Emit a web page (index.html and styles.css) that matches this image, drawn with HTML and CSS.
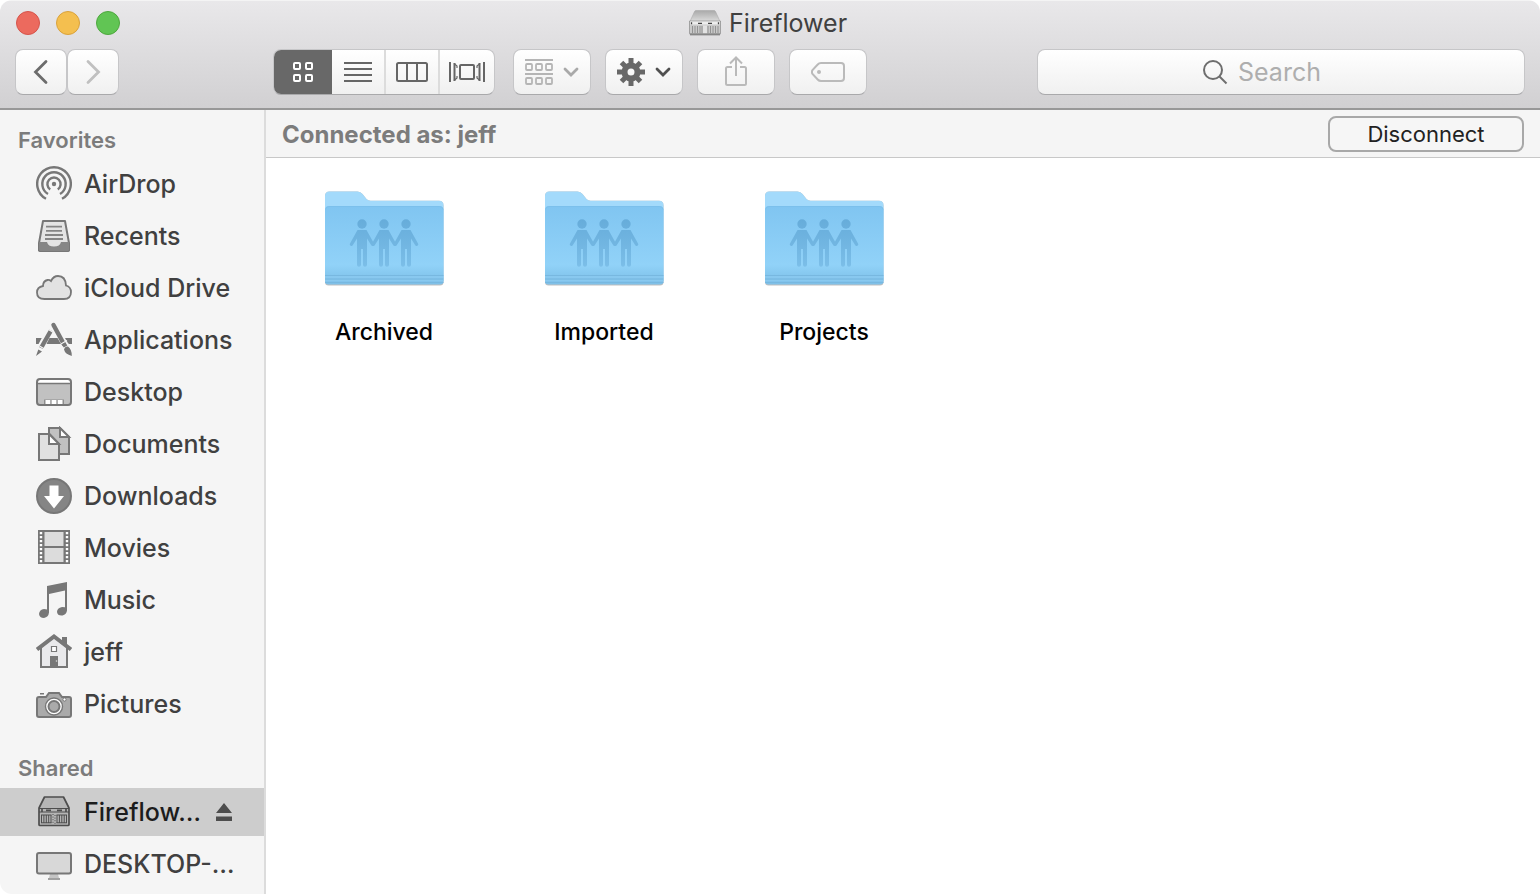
FILE: index.html
```html
<!DOCTYPE html>
<html lang="en">
<head>
<meta charset="utf-8">
<title>Fireflower</title>
<meta name="viewport" content="width=device-width, initial-scale=1">
<link rel="stylesheet" href="styles.css">
</head>
<body>
<svg class="defs" aria-hidden="true">
  <defs>
    <linearGradient id="folder-front" x1="0" y1="0" x2="0" y2="1">
      <stop offset="0" stop-color="#80c5f1"/>
      <stop offset="0.75" stop-color="#91d2f8"/>
      <stop offset="0.87" stop-color="#86c8ef"/>
      <stop offset="1" stop-color="#7fc0e8"/>
    </linearGradient>
    <linearGradient id="server-top" x1="0" y1="0" x2="0" y2="1">
      <stop offset="0" stop-color="#a9a9a9"/>
      <stop offset="1" stop-color="#dcdcdc"/>
    </linearGradient>
    <linearGradient id="people" gradientUnits="userSpaceOnUse" x1="0" y1="43" x2="0" y2="90">
      <stop offset="0" stop-color="#66acda"/>
      <stop offset="1" stop-color="#7bbee8"/>
    </linearGradient>
    <g id="person">
      <circle cx="0" cy="48" r="4.7"/>
      <path d="M-4.500 54h9l7.500 13.500a1.600 1.600 0 0 1-2.900 1.500L5 62.500V88.700a1.500 1.500 0 0 1-4 0V73h-2v15.700a1.500 1.500 0 0 1-4 0V62.500L-9.100 69a1.600 1.600 0 0 1-2.900-1.500z"/>
    </g>
    <symbol id="folder" viewBox="0 0 128 128">
      <path d="M5 106V20q0-4.500 4.500-4.500h28q3 0 5 2.500l4 5q1.500 1.700 4 1.700h68.500q4.500 0 4.500 4.500V106q0 3.500-3.500 3.500H8.500Q5 109.500 5 106z" fill="#000" opacity=".25"/>
      <path d="M5 105V20q0-4.500 4.500-4.500h28q3 0 5 2.500l4 5q1.500 1.700 4 1.700h68.500q4.500 0 4.500 4.500V105z" fill="#a3dafb"/>
      <path d="M5 34q0-4 4-4h110.500q4 0 4 4v71q0 3.500-3.500 3.500H8.500Q5 108.500 5 105z" fill="url(#folder-front)"/>
      <path d="M5.500 33.500q.5-3 3.500-3h110.500q3 0 3.500 3" fill="none" stroke="#7abfeb" stroke-width=".8"/>
      <path d="M5 99.500h118.500M5 103h118.500M5 106.500h118.500" stroke="#78b8e0" stroke-width="1"/>
      <path d="M5 101h118.500M5 104.700h118.500" stroke="#8dcbf1" stroke-width="1"/>
      <g fill="url(#people)">
        <use href="#person" x="42"/>
        <use href="#person" x="64"/>
        <use href="#person" x="86"/>
      </g>
    </symbol>
  </defs>
</svg>
<div class="window">
  <header class="chrome">
    <div class="titlebar">
      <div class="lights">
        <button class="light light-close" aria-label="Close"></button>
        <button class="light light-min" aria-label="Minimize"></button>
        <button class="light light-zoom" aria-label="Zoom"></button>
      </div>
      <h1 class="title">
        <svg class="title-icon" viewBox="0 0 32 26" aria-hidden="true">
          <path d="M1 24h30v1.500H1z" fill="#000" opacity=".3"/>
          <path d="M5.500 1.500Q6 .5 7 .5h18q1 0 1.500 1L31 11.500H1z" fill="url(#server-top)" stroke="#aaa" stroke-width=".6"/>
          <path d="M.5 11h31v12.500q0 .8-.8.800H1.300q-.8 0-.8-.8z" fill="#c9c9c9" stroke="#8a8a8a" stroke-width=".7"/>
          <path d="M1 11.500h30v3H1z" fill="#ededed"/>
          <path d="M2.500 12.200v2M29.500 12.200v2M9 13.300h4M19 13.300h4" stroke="#444" stroke-width="1.300"/>
          <path d="M3.500 16v7M6 16v7M8.500 16v7M11 16v7M13 16v7M19 16v7M21.500 16v7M24 16v7M26.500 16v7M29 16v7" stroke="#8c8c8c" stroke-width=".9"/>
          <path d="M15 15.500v8M17 15.500v8" stroke="#f4f4f4" stroke-width="1.200"/>
          <path d="M1 24h30" stroke="#777"/>
        </svg>
        <span>Fireflower</span>
      </h1>
    </div>
    <div class="toolbar">
      <div class="nav">
        <button class="tool nav-button" aria-label="Back"><svg width="16" height="26" viewBox="0 0 16 26" fill="none" stroke="#6c6c6c" stroke-width="2.800" stroke-linecap="round"><path d="M13 2.500 2.500 13 13 23.500"/></svg></button>
        <button class="tool nav-button" aria-label="Forward" disabled><svg width="16" height="26" viewBox="0 0 16 26" fill="none" stroke="#c0c0c0" stroke-width="2.800" stroke-linecap="round"><path d="M3 2.500 13.500 13 3 23.500"/></svg></button>
      </div>
      <div class="views">
        <button class="view view-active" aria-label="Icon view"><svg width="22" height="22" viewBox="0 0 22 22" fill="none" stroke="#fff" stroke-width="2"><rect x="2" y="2" width="6" height="6" rx="1"/><rect x="14" y="2" width="6" height="6" rx="1"/><rect x="2" y="14" width="6" height="6" rx="1"/><rect x="14" y="14" width="6" height="6" rx="1"/></svg></button>
        <button class="view view-list" aria-label="List view"><svg width="28" height="20" viewBox="0 0 28 20" stroke="#666" stroke-width="2"><path d="M0 1h28M0 7h28M0 13h28M0 19h28"/></svg></button>
        <button class="view" aria-label="Column view"><svg width="32" height="20" viewBox="0 0 32 20" fill="none" stroke="#666" stroke-width="2"><rect x="1" y="1" width="30" height="18" rx="1.500"/><path d="M11 1v18M21 1v18"/></svg></button>
        <button class="view view-flow" aria-label="Cover flow view"><svg width="36" height="20" viewBox="0 0 36 20" fill="none" stroke="#666" stroke-width="2"><rect x="11" y="3" width="14" height="14" rx="1"/><path d="M1 0v20M35 0v20M5.500 1v18M30.500 1v18"/><path d="M5 1.500 8 4v2M5 18.500 8 16v-2M31 1.500 28 4v2M31 18.500 28 16v-2" stroke-width="1.200"/></svg></button>
      </div>
      <button class="tool menu-button" aria-label="Arrange" disabled>
        <svg width="28" height="26" viewBox="0 0 28 26" fill="none" stroke="#b5b5b5" stroke-width="1.800"><path d="M0 1h28M0 15h28"/><rect x="1" y="5" width="6" height="6" rx="1"/><rect x="11" y="5" width="6" height="6" rx="1"/><rect x="21" y="5" width="6" height="6" rx="1"/><rect x="1" y="19" width="6" height="6" rx="1"/><rect x="11" y="19" width="6" height="6" rx="1"/><rect x="21" y="19" width="6" height="6" rx="1"/></svg>
        <svg width="16" height="12" viewBox="0 0 16 12" fill="none" stroke="#a9a9a9" stroke-width="2.800" stroke-linecap="round"><path d="m2 3 6 6 6-6"/></svg>
      </button>
      <button class="tool menu-button" aria-label="Actions">
        <svg width="28" height="28" viewBox="-14 -14 28 28"><g stroke="#686868" stroke-width="5"><path d="M0-14v8M0 14V6M-14 0h8M14 0H6"/><path d="m-9.500-9.500 5 5M9.500 9.500l-5-5M-9.500 9.500l5-5M9.500-9.500l-5 5"/></g><circle r="6.500" fill="none" stroke="#686868" stroke-width="6"/></svg>
        <svg width="16" height="12" viewBox="0 0 16 12" fill="none" stroke="#505050" stroke-width="2.800" stroke-linecap="round"><path d="m2 3 6 6 6-6"/></svg>
      </button>
      <button class="tool menu-button" aria-label="Share" disabled><svg width="24" height="32" viewBox="0 0 24 32" fill="none" stroke="#bababa" stroke-width="2"><path d="M8 11H3.500Q2 11 2 12.500v15Q2 29 3.500 29h17q1.500 0 1.500-1.500v-15Q22 11 20.500 11H16M12 20V1.500M6 7.500l6-6 6 6"/></svg></button>
      <button class="tool menu-button" aria-label="Edit tags" disabled><svg width="34" height="20" viewBox="0 0 34 20" fill="none" stroke="#bababa" stroke-width="2"><path d="M10 1h20q3 0 3 3v12q0 3-3 3H10q-2 0-3.300-1.500L1.500 12q-1.200-2 0-4l5.200-5.500Q8 1 10 1z"/><circle cx="8" cy="10" r="2" fill="#bababa" stroke="none"/></svg></button>
      <label class="tool search">
        <svg width="26" height="26" viewBox="0 0 26 26" fill="none" stroke="#6e6e6e" stroke-width="2"><circle cx="11" cy="11" r="9"/><path d="m17.500 17.500 7 7"/></svg>
        <input class="search-input" type="text" placeholder="Search" aria-label="Search">
      </label>
    </div>
  </header>
  <div class="body">
    <nav class="sidebar">
      <section class="group">
        <h2 class="group-title">Favorites</h2>
        <ul class="places">
          <li><a class="place" href="#"><svg class="icon" viewBox="0 0 36 36" fill="none" stroke="#777" stroke-width="2.400"><path d="M10 32.800A16.800 16.800 0 1 1 26 32.800"/><path d="M12 28A11.700 11.700 0 1 1 24 28"/><path d="M14.200 23.500A6.600 6.600 0 1 1 21.800 23.500"/><circle cx="18" cy="18" r="2.200" fill="#777" stroke="none"/></svg><span>AirDrop</span></a></li>
          <li><a class="place" href="#"><svg class="icon" viewBox="0 0 36 36"><path d="M7 3h22l4 22v7.500L32 33H4l-1-.5V25z" fill="#e4e4e4" stroke="#777" stroke-width="2" stroke-linejoin="round"/><path d="M3 24h8q1 4.500 7 4.500T25 24h8v8l-1 1H4l-1-1z" fill="#868686"/><path d="M10 8.700h16M10 12.800h16M9 17h18M9 21h18" stroke="#858585" stroke-width="1.800"/></svg><span>Recents</span></a></li>
          <li><a class="place" href="#"><svg class="icon" viewBox="0 0 36 36"><path d="M8.500 29Q1 29 1 22.500q0-5.500 6-6.500 0-5 4.500-6 2-.3 3.500 1Q17.500 6 22 6q7.500 0 8 9.500 5 1.500 5 6.500 0 7-7 7z" fill="#e2e2e2" stroke="#777" stroke-width="1.800"/></svg><span>iCloud Drive</span></a></li>
          <li><a class="place" href="#"><svg class="icon" viewBox="0 0 36 36"><path d="M0 16h36v6H0z" fill="#777"/><g fill="none" stroke="#f5f5f5" stroke-width="7.500"><path d="M17.500 2 2 31"/><path d="m17 3 17 29"/></g><path d="M13.500 16h8l3.500 6H10.500z" fill="#777"/><g fill="none" stroke="#777" stroke-width="4.400"><path d="M15 8.500 5 26"/><path d="m17.500 3 10 18.500" stroke-linecap="round"/></g><path d="m12.500 7.500 5 3M3.500 24l5 3M25 22l6-3.500M27 25l6-3" stroke="#f5f5f5" stroke-width="1.200"/><path d="M2.300 27.500 6 29.500 0 34zM28 27.500Q29 24 32 24.500q4 3 3.800 9.500Q29 32 28 27.500zM25.500 22.500l4-2 1.800 3-3.500 2z" fill="#777"/></svg><span>Applications</span></a></li>
          <li><a class="place" href="#"><svg class="icon" viewBox="0 0 36 36"><rect x="1" y="5" width="34" height="26" rx="3" fill="#c1c1c1"/><path d="M2 9V7.500Q2 6 4 6h28q2 0 2 1.500V9z" fill="#fff"/><path d="M1 9.500h34" stroke="#777" stroke-width="1.600"/><path d="M8 25.500h20V31H8z" fill="#8e8e8e"/><path d="M9.500 26h4.800v4H9.500zM15.600 26h4.800v4h-4.800zM21.700 26h4.800v4h-4.800z" fill="#fff"/><rect x="1" y="5" width="34" height="26" rx="3" fill="none" stroke="#777" stroke-width="2"/></svg><span>Desktop</span></a></li>
          <li><a class="place" href="#"><svg class="icon" viewBox="0 0 36 36" stroke="#777" stroke-width="2"><path d="M13 2h11l9 9v17H13z" fill="#c1c1c1"/><path d="M24 2v9h9z" fill="#fff"/><path d="M3 8h10.500L23 18v16H3z" fill="#e0e0e0"/><path d="M13 8v10h10z" fill="#fff"/></svg><span>Documents</span></a></li>
          <li><a class="place" href="#"><svg class="icon" viewBox="0 0 36 36"><circle cx="18" cy="18" r="17" fill="#858585" stroke="#777" stroke-width="2"/><path d="M13.500 7.500h9V18H28L18 30.500 8 18h5.500z" fill="#fff"/></svg><span>Downloads</span></a></li>
          <li><a class="place" href="#"><svg class="icon" viewBox="0 0 36 36"><path d="M2 0h32v34H2z" fill="#777"/><path d="M8.500 2h19v14h-19zM8.500 18h19v14h-19z" fill="#dcdcdc"/><path d="M5 2v31M31 2v31" stroke="#fff" stroke-width="2.400" stroke-dasharray="2.200 1.800"/></svg><span>Movies</span></a></li>
          <li><a class="place" href="#"><svg class="icon" viewBox="0 0 36 36" fill="#777"><path d="M11 4 31 0v28.500q-.5 4-4.500 5-5 .5-5.500-3.500 0-4 5-5 2 0 3 .3V8.500L13 12v18.500Q12.500 35 8 36q-4.500 0-5-4 .5-4.500 5-5 2 0 3 .5z"/></svg><span>Music</span></a></li>
          <li><a class="place" href="#"><svg class="icon" viewBox="0 0 36 36"><path d="M26 3h5v11l-5-5z" fill="#777"/><path d="M5 13 18 3l13 10v20H5z" fill="#e9e9eb" stroke="#777" stroke-width="2"/><path d="M1 15.500 18 2.500l17 13" fill="none" stroke="#777" stroke-width="4"/><path d="M15.500 12.500h5v5h-5z" fill="#fff" stroke="#777" stroke-width="1.200"/><path d="M14 22h8v11h-8z" fill="#777"/><circle cx="20.500" cy="27" r=".8" fill="#ddd"/></svg><span>jeff</span></a></li>
          <li><a class="place" href="#"><svg class="icon" viewBox="0 0 36 36"><path d="M4 7h4v1.500H4z" fill="#777"/><path d="M3 11h7l3-4h10l3 4h7q2 0 2 2v16q0 2-2 2H3q-2 0-2-2V13q0-2 2-2z" fill="#aaa" stroke="#777" stroke-width="2"/><circle cx="18" cy="20.500" r="8.500" fill="#fff" stroke="#777" stroke-width="1.400"/><circle cx="18" cy="20.500" r="5.500" fill="#aaa" stroke="#777" stroke-width="2"/><circle cx="28.500" cy="13.500" r="1.600" fill="#fff" stroke="#777"/></svg><span>Pictures</span></a></li>
        </ul>
      </section>
      <section class="group">
        <h2 class="group-title">Shared</h2>
        <ul class="places">
          <li class="selected"><a class="place" href="#"><svg class="icon" viewBox="0 0 36 36"><path d="M3 14 8.500 3h19L33 14v16.500q0 1-1 1H4q-1 0-1-1z" fill="#b5b5b5" stroke="#4d4d4d" stroke-width="1.700" stroke-linejoin="round"/><path d="M3 14.500h30M3 18h30" stroke="#4d4d4d" stroke-width="1.100"/><path d="M10 16.300h5M21 16.300h5M6 14v4M30 14v4" stroke="#4d4d4d" stroke-width="1.700"/><path d="M5.500 21v8M7.900 21v8M10.300 21v8M12.700 21v8M15 21v8M21 21v8M23.400 21v8M25.800 21v8M28.200 21v8M30.500 21v8" stroke="#4d4d4d"/><path d="M5 21h10.500M5 28.800h10.500M20.500 21H31M20.500 28.800H31" stroke="#4d4d4d"/><path d="M17 20v10M19 21v9" stroke="#4d4d4d" stroke-dasharray="1 1.600"/></svg><span>Fireflow…</span></a><button class="eject" aria-label="Eject"><svg width="16" height="18" viewBox="0 0 16 18" fill="#4d4d4d"><path d="m8 0 8 10H0zM0 13.500h16v4.500H0z"/></svg></button></li>
          <li><a class="place" href="#"><svg class="icon" viewBox="0 0 36 36"><path d="M14 28h8l1 4H13z" fill="#c4c4c4"/><path d="M12 32h12v2H12z" fill="#a0a0a0"/><rect x="1" y="7" width="34" height="20.500" rx="2" fill="#d8d8d8" stroke="#777" stroke-width="2"/></svg><span>DESKTOP-…</span></a></li>
        </ul>
      </section>
    </nav>
    <main class="content">
      <div class="status">
        <strong>Connected as: jeff</strong>
        <button class="disconnect">Disconnect</button>
      </div>
      <div class="files">
        <a class="file" href="#"><svg class="folder"><use href="#folder"/></svg><span>Archived</span></a>
        <a class="file" href="#"><svg class="folder"><use href="#folder"/></svg><span>Imported</span></a>
        <a class="file" href="#"><svg class="folder"><use href="#folder"/></svg><span>Projects</span></a>
      </div>
    </main>
  </div>
</div>
</body>
</html>
```
FILE: styles.css
```css
* {
  box-sizing: border-box;
}

body {
  margin: 0;
  background: #fff;
  font-family: Inter, "Liberation Sans", sans-serif;
  color: #404040;
}

button,
input {
  margin: 0;
  padding: 0;
  font: inherit;
}

a {
  color: inherit;
  text-decoration: none;
}

.defs {
  position: absolute;
  width: 0;
  height: 0;
}

.window {
  display: flex;
  flex-direction: column;
  min-height: 100vh;
  border-radius: 12px;
  overflow: hidden;
}

.chrome {
  padding: 0 15px 13px;
  background: linear-gradient(#e9e8ea, #d1d0d2);
  border-top: 1px solid #f4f4f4;
  border-bottom: 2px solid #989898;
}

.titlebar {
  display: grid;
  grid-template-columns: 1fr auto 1fr;
  align-items: center;
  height: 48px;
  padding: 0 4px 5px 0;
}

.lights {
  display: flex;
  gap: 16px;
  padding-left: 1px;
}

.light {
  width: 24px;
  height: 24px;
  border: 1px solid;
  border-radius: 50%;
}

.light-close {
  background: #ec6a5e;
  border-color: #d5544b;
}

.light-min {
  background: #f4bf4f;
  border-color: #d9a23c;
}

.light-zoom {
  background: #61c554;
  border-color: #4ea73e;
}

.title {
  display: flex;
  align-items: center;
  gap: 8px;
  margin: 0;
  font-size: 25px;
  font-weight: 400;
  line-height: 32px;
}

.title-icon {
  width: 32px;
  height: 26px;
}

.toolbar {
  display: flex;
  align-items: center;
}

.tool,
.views {
  height: 46px;
  background: linear-gradient(#fff, #f0f0f0);
  border: 1px solid #c6c6c8;
  border-bottom-color: #a9a9ab;
  border-radius: 8px;
}

.tool {
  display: flex;
  align-items: center;
  justify-content: center;
}

.nav {
  display: flex;
}

.nav-button {
  width: 52px;
}

.views {
  display: flex;
  margin-left: 154px;
  overflow: hidden;
}

.view {
  display: flex;
  align-items: center;
  justify-content: center;
  width: 54px;
  background: none;
  border: 0;
  border-left: 2px solid #dcdcdc;
}

.view-active {
  width: 58px;
  background: #686868;
  border: 0;
}

.view-list {
  width: 52px;
  border: 0;
}

.view-flow {
  width: 56px;
}

.menu-button {
  gap: 10px;
  width: 78px;
  margin-left: 14px;
}

.views + .menu-button {
  margin-left: 18px;
}

.search {
  flex: 1;
  gap: 10px;
  margin-left: 170px;
}

.search-input {
  width: 122px;
  background: none;
  border: 0;
  outline: 0;
  font-size: 25px;
}

.search-input::placeholder {
  color: #aeaeae;
  opacity: 1;
}

.body {
  display: flex;
  flex: 1;
}

.sidebar {
  flex: none;
  width: 266px;
  padding: 10px 0 5px;
  background: #f5f5f5;
  border-right: 2px solid #dcdcdc;
}

.group + .group {
  margin-top: 20px;
}

.group-title {
  margin: 0;
  padding-left: 18px;
  font-size: 22px;
  font-weight: 600;
  line-height: 40px;
  color: #7c7c7c;
}

.places {
  display: grid;
  gap: 4px;
  margin: 0;
  padding: 0;
  list-style: none;
}

.places li {
  display: flex;
  align-items: center;
  height: 48px;
}

.place {
  display: flex;
  flex: 1;
  align-items: center;
  gap: 12px;
  padding-left: 36px;
  font-size: 25px;
  font-weight: 500;
  line-height: 32px;
  white-space: nowrap;
}

.icon {
  flex: none;
  width: 36px;
  height: 36px;
}

.selected {
  background: #cdcdcd;
  color: #1c1c1c;
}

.eject {
  display: flex;
  margin-right: 32px;
  background: none;
  border: 0;
}

.content {
  flex: 1;
  background: #fff;
}

.status {
  display: flex;
  align-items: center;
  justify-content: space-between;
  height: 48px;
  padding: 1px 16px 0;
  background: #f5f5f5;
  border-bottom: 1px solid #c8c8c8;
  font-size: 24px;
  color: #7c7c7c;
}

.disconnect {
  width: 196px;
  height: 36px;
  background: #f6f6f6;
  border: 2px solid #a8a8a8;
  border-radius: 8px;
  font-size: 22px;
  line-height: 28px;
  color: #222;
}

.files {
  display: flex;
  flex-wrap: wrap;
  padding: 18px 8px;
}

.file {
  display: flex;
  flex-direction: column;
  align-items: center;
  gap: 12px;
  width: 220px;
  font-size: 23px;
  font-weight: 500;
  line-height: 32px;
  color: #000;
}

.folder {
  width: 128px;
  height: 128px;
}
```
